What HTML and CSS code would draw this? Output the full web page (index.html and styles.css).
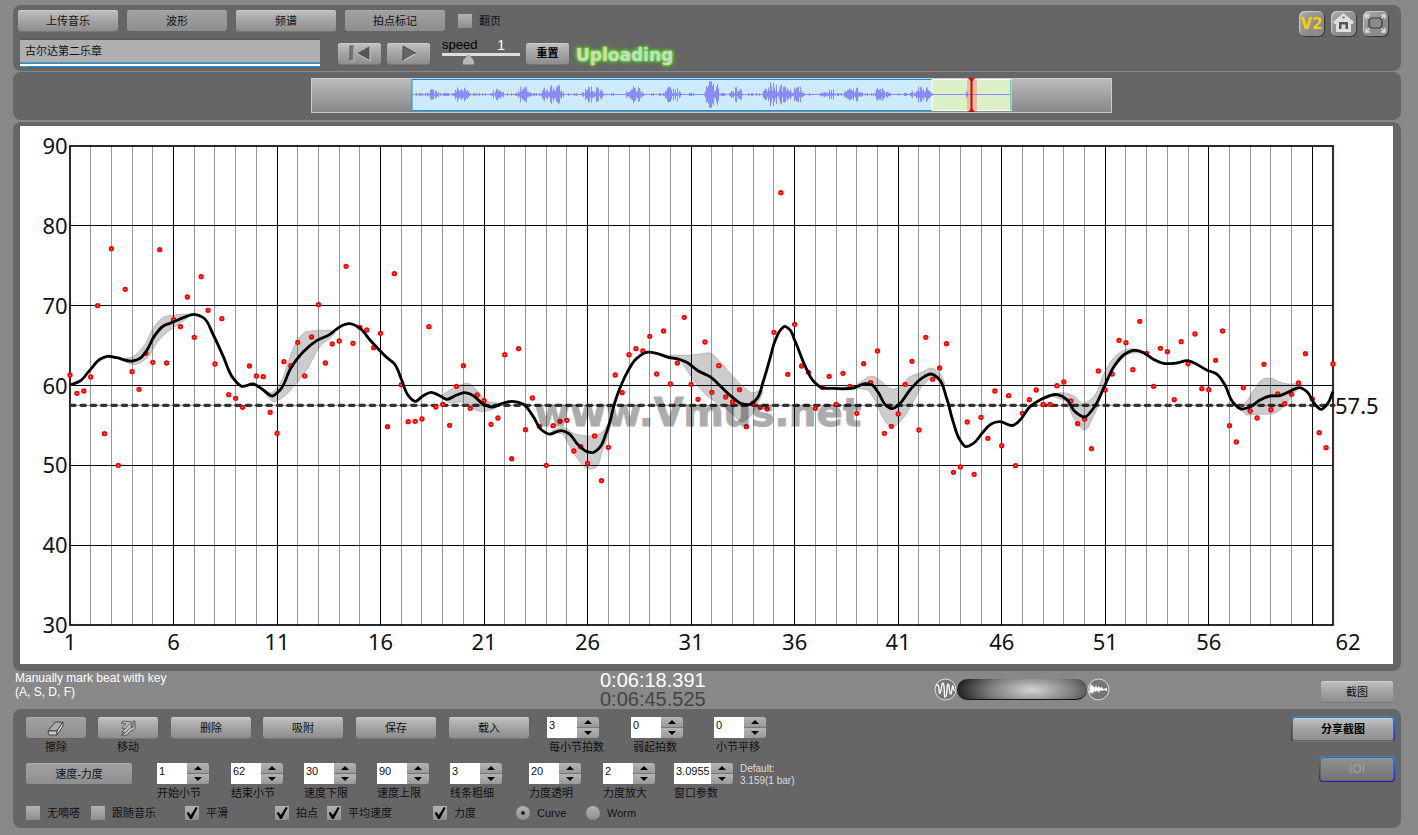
FILE: index.html
```html
<!DOCTYPE html>
<html lang="zh-CN">
<head>
<meta charset="utf-8">
<title>Vmus.net</title>
<link rel="stylesheet" href="styles.css">
</head>
<body>
<header class="panel top">
  <div class="top-main">
    <div class="tabs">
      <button class="btn w100">上传音乐</button>
      <button class="btn w100 dim">波形</button>
      <button class="btn w100">频谱</button>
      <button class="btn w100 dim">拍点标记</button>
      <div class="check flip"><input type="checkbox" id="flip"><label for="flip">翻页</label></div>
    </div>
    <div class="player">
      <input class="title" type="text" value="古尔达第二乐章" aria-label="曲目">
      <button class="btn transport" aria-label="后退"><svg width="24" height="17" viewBox="0 0 24 17"><path d="M2 1h4v15H2z" fill="#777" stroke="#555"/><path d="M6 1v15H2" fill="none" stroke="#ddd"/><path d="M22 1v15L9 8.500z" fill="#555"/><path d="M22 1v15L9 8.500" fill="none" stroke="#ccc"/></svg></button>
      <button class="btn transport" aria-label="播放"><svg width="24" height="17" viewBox="0 0 24 17"><path d="M6 1v15l13-7.500z" fill="#666"/><path d="M6 16l13-7.500" stroke="#ddd"/><path d="M6 16V1l13 7.500" fill="none" stroke="#444"/></svg></button>
      <div class="speed">
        <div class="speed-text"><label for="speed">speed</label><output for="speed">1</output></div>
        <input id="speed" type="range" min="0" max="3.2" step="0.1" value="1">
      </div>
      <button class="btn transport strong">重置</button>
      <span class="status">Uploading</span>
    </div>
  </div>
  <nav class="tools">
    <button class="tool v2">V2</button>
    <button class="tool" aria-label="主页"><svg width="25" height="25" viewBox="0 0 25 25"><path d="M12.500 2L23 11l-1.500 2H20v8H5v-8H3.500L2 11z" fill="#ddd"/><path d="M8 18v-7h9v7h-2.500v-4.500h-4V18z" fill="#555"/><circle cx="12.500" cy="6.500" r="1.300" fill="#888"/></svg></button>
    <button class="tool" aria-label="全屏"><svg width="25" height="25" viewBox="0 0 25 25"><path d="M8 7h9l2 2v6l-2 2H8l-2-2V9z" fill="#8a8a8a" stroke="#3c3c3c" stroke-width="1.200"/><g stroke="#ddd" stroke-width="1.400" fill="none"><path d="M3 8V4h4M3 4l3.500 3M18 4h4v4M22 4l-3.500 3M3 17v4h4M3 21l3.500-3.500M18 21h4v-4M22 21l-3.500-3.500"/></g></svg></button>
  </nav>
</header>

<section class="panel overview">
  <div class="strip"><svg id="wave" viewBox="0 0 799 33" aria-label="波形概览"></svg></div>
</section>

<main class="panel chart">
  <svg id="plot" viewBox="60 3 4119 1614" aria-label="速度曲线"></svg>
</main>

<section class="info">
  <p class="hint">Manually mark beat with key<br>(A, S, D, F)</p>
  <p class="time">0:06:18.391<br><span>0:06:45.525</span></p>
  <div class="zoomer">
    <svg width="23" height="23" viewBox="0 0 23 23"><circle cx="11.500" cy="11.500" r="10.500" fill="#777" stroke="#ddd"/><path d="M2 8c2-3 3 0 3 4s1 5 2 0 1-9 2.500-6 0 14 2 13 1-12 2.500-13 1 9 2.500 10S18 6 19 8s0 5 2 4" fill="none" stroke="#fff" stroke-width="1.300"/></svg>
    <div class="knob"></div>
    <svg width="23" height="23" viewBox="0 0 23 23"><circle cx="11.500" cy="11.500" r="10.500" fill="#777" stroke="#ddd"/><path d="M3 5l1 3 1-2 1 3 1-1 1 2 1-3 1 3 2-2 1 2 2-1 1 2 4-1v3l-3-1-2 1-2-1-1 3-2-3-1 2-2-1-1 3-1-2-1 2-1-2-1 3z" fill="#fff"/></svg>
  </div>
  <button class="btn shot">截图</button>
</section>

<footer class="panel controls">
  <div class="rows">
    <div class="row row-a">
      <div class="field center"><button class="btn dim" id="erase" aria-label="擦除"><svg width="18" height="16" viewBox="0 0 18 16"><path d="M1 11L8 2h8l-6 9z" fill="#aaa" stroke="#444"/><path d="M1 11h9v4H2z" fill="#ccc" stroke="#444"/><path d="M10 11l6-9v4l-6 9z" fill="#ddd" stroke="#444"/></svg></button><span>擦除</span></div>
      <div class="field center"><button class="btn" id="move" aria-label="移动"><svg width="18" height="18" viewBox="0 0 18 18"><path d="M2 16c2 1 5 1 7-1l3-3c3 0 4-2 4-4V2h-2v6l-2 1V3L4 2 2 4l5 1-4 4 3 1-3 3 3 1z" fill="#bbb" stroke="#555"/><path d="M6 14l5-5M6 10l4-5" stroke="#666"/></svg></button><span>移动</span></div>
      <div><button class="btn w80">删除</button></div>
      <div><button class="btn w80">吸附</button></div>
      <div><button class="btn w80">保存</button></div>
      <div><button class="btn w80">载入</button></div>
      <div class="field"><div class="stepper"><input id="f1" value="3"><span><button aria-label="加"></button><button aria-label="减"></button></span></div><label for="f1">每小节拍数</label></div>
      <div class="field"><div class="stepper"><input id="f2" value="0"><span><button aria-label="加"></button><button aria-label="减"></button></span></div><label for="f2">弱起拍数</label></div>
      <div class="field"><div class="stepper"><input id="f3" value="0"><span><button aria-label="加"></button><button aria-label="减"></button></span></div><label for="f3">小节平移</label></div>
    </div>
    <div class="row row-b">
      <div><button class="btn w106 dim">速度-力度</button></div>
      <div class="field"><div class="stepper"><input id="g1" value="1"><span><button aria-label="加"></button><button aria-label="减"></button></span></div><label for="g1">开始小节</label></div>
      <div class="field"><div class="stepper"><input id="g2" value="62"><span><button aria-label="加"></button><button aria-label="减"></button></span></div><label for="g2">结束小节</label></div>
      <div class="field"><div class="stepper"><input id="g3" value="30"><span><button aria-label="加"></button><button aria-label="减"></button></span></div><label for="g3">速度下限</label></div>
      <div class="field"><div class="stepper"><input id="g4" value="90"><span><button aria-label="加"></button><button aria-label="减"></button></span></div><label for="g4">速度上限</label></div>
      <div class="field"><div class="stepper"><input id="g5" value="3"><span><button aria-label="加"></button><button aria-label="减"></button></span></div><label for="g5">线条粗细</label></div>
      <div class="field"><div class="stepper"><input id="g6" value="20"><span><button aria-label="加"></button><button aria-label="减"></button></span></div><label for="g6">力度透明</label></div>
      <div class="field"><div class="stepper"><input id="g7" value="2"><span><button aria-label="加"></button><button aria-label="减"></button></span></div><label for="g7">力度放大</label></div>
      <div class="field"><div class="stepper wide"><input id="g8" value="3.0955"><span><button aria-label="加"></button><button aria-label="减"></button></span></div><label for="g8">窗口参数</label></div>
      <p class="default">Default:<br>3.159(1 bar)</p>
    </div>
    <div class="row row-c">
      <div class="check"><input type="checkbox" id="c1"><label for="c1">无嘀嗒</label></div>
      <div class="check"><input type="checkbox" id="c2"><label for="c2">跟随音乐</label></div>
      <div class="check"><input type="checkbox" id="c3" checked><label for="c3">平滑</label></div>
      <div class="check"><input type="checkbox" id="c4" checked><label for="c4">拍点</label></div>
      <div class="check"><input type="checkbox" id="c5" checked><label for="c5">平均速度</label></div>
      <div class="check"><input type="checkbox" id="c6" checked><label for="c6">力度</label></div>
      <div class="check"><input type="radio" name="kind" id="r1" checked><label for="r1">Curve</label></div>
      <div class="check"><input type="radio" name="kind" id="r2"><label for="r2">Worm</label></div>
    </div>
  </div>
  <div class="share">
    <div class="ring ring-wide"><button class="btn strong">分享截图</button></div>
    <div class="ring ring-off"><button class="btn" disabled>IOI</button></div>
  </div>
</footer>
<script src="plot.js"></script>
</body>
</html>
```

FILE: styles.css
```css
* { box-sizing: border-box; }
body {
  margin: 0;
  padding: 5px 17px 7px 13px;
  background: #888;
  color: #111;
  font: 11px/12px "Liberation Sans", "Noto Sans CJK SC", sans-serif;
  display: flex;
  flex-direction: column;
}
p { margin: 0; }
button, input { font: inherit; color: inherit; margin: 0; padding: 0; border: 0; }
label, span { white-space: nowrap; }
.panel { background: #666; border-radius: 8px; }

.btn {
  height: 21px;
  border-radius: 3px;
  background: linear-gradient(#c2c2c2, #a4a4a4 50%, #8e8e8e);
  box-shadow: inset 0 1px 0 #ccc, 0 1px 0 #777;
  display: block;
  text-align: center;
}
.btn.dim { background: linear-gradient(#a2a2a2, #8e8e8e); box-shadow: inset 0 1px 0 #aaa; }
.btn svg { display: block; margin: 0 auto; }
.w100 { width: 100px; }
.w80 { width: 80px; }
.w106 { width: 106px; }
.strong { font-weight: bold; color: #000; }

.top { display: flex; justify-content: space-between; padding: 5px 13px 4px 5px; }
.top-main { display: flex; flex-direction: column; gap: 8px; }
.tabs { display: flex; gap: 9px; }
.flip { margin-left: 4px; }
.player { display: flex; align-items: center; padding-left: 2px; }
.title {
  width: 300px;
  height: 28px;
  margin-right: 18px;
  padding: 0 5px 6px;
  background: linear-gradient(#555 0 1px, #b0b0b0 1px 23px, #888 23px 24px, #09f 24px 25px, #fff 25px 27px, #09f 27px);
}
.transport { width: 43px; margin-right: 6px; }
.speed { width: 78px; height: 28px; margin: 0 6px; display: flex; flex-direction: column; gap: 2px; }
.speed-text { display: flex; justify-content: space-between; padding-right: 15px; font-size: 13px; line-height: 12px; color: #000; }
.speed-text output { color: #fff; font-size: 14px; }
.speed input {
  appearance: none;
  width: 100%;
  height: 12px;
  background: linear-gradient(#ddd, #ddd) 0 0 / 100% 3px no-repeat;
}
.speed input::-webkit-slider-thumb {
  appearance: none;
  width: 11px;
  height: 11px;
  background: #b8b8b8;
  clip-path: polygon(50% 0, 100% 65%, 100% 100%, 0 100%, 0 65%);
}
.status {
  font: bold 17px/20px "DejaVu Sans", sans-serif;
  color: #d4d4d4;
  text-shadow: 0 0 2px #6f2, 0 0 2px #6e2, 0 0 4px #6d2, 0 0 5px #5c2;
  padding: 4px 0 0 1px;
}
.tools { display: flex; gap: 7px; padding-top: 1px; }
.tool {
  width: 25px;
  height: 25px;
  border-radius: 6px;
  background: linear-gradient(135deg, #aaa, #8c8c8c 60%);
  box-shadow: inset 1px 1px 1px #ccc, 1px 1px 1px #2c3c34;
}
.tool svg { display: block; }
.v2 { font: bold 15px/24px "DejaVu Sans", sans-serif; color: #fc0; }

.overview { margin-top: 1px; padding: 6px 0 7px 9px; display: flex; justify-content: center; }
.strip { width: 801px; border: 1px solid #ccc; background: linear-gradient(#bbb, #888); }
.strip svg { display: block; width: 100%; overflow: visible; }

.chart { margin-top: 2px; padding: 4px 8px 7px 7px; }
.chart svg { display: block; width: 100%; background: #fff; }
.axis { font: 66px "Noto Sans", sans-serif; fill: #111; }
.mark { font: bold 116px "DejaVu Sans", sans-serif; fill: #000; stroke: #000; stroke-width: 3; opacity: .32; }

.info { display: grid; grid-template-columns: 585px 334px 1fr 72px; padding: 0 8px 0 2px; height: 38px; }
.hint { color: #fff; font-size: 12px; line-height: 14px; }
.time { color: #fff; font-size: 20px; line-height: 19px; }
.time span { color: #444; }
.zoomer { display: flex; padding-top: 7px; }
.knob {
  width: 130px;
  height: 21px;
  margin-top: 1px;
  border-radius: 11px;
  background: radial-gradient(ellipse 75px 26px at 75px 11px, #d4d4d4, #777 60%, #222);
  border-bottom: 1px solid #111;
}
.shot { margin-top: 10px; }

.controls { display: flex; justify-content: space-between; padding: 8px 6px 8px 13px; }
.row { display: grid; align-items: start; }
.row-a { grid-template-columns: 72px 73px 92px 93px 93px 98px 84px 83px 60px; height: 46px; }
.row-b { grid-template-columns: 131px 74px 73px 73px 73px 79px 74px 71px 66px 80px; height: 43px; }
.row-c { grid-template-columns: 65px 94px 90px 52px 106px 83px 70px 80px; height: 14px; }
.field { display: flex; flex-direction: column; gap: 3px; }
.field .btn { width: 60px; }
.row-a label { padding-left: 2px; }
.center { width: 60px; text-align: center; }
.stepper { display: flex; height: 21px; }
.stepper input { width: 30px; background: #fff; padding: 0 2px 5px; }
.wide input { width: 37px; }
.stepper span {
  width: 22px;
  display: grid;
  grid-template-rows: 1fr 1fr;
  gap: 1px;
  background: #777;
  border-radius: 0 3px 3px 0;
  overflow: hidden;
}
.stepper button { background: linear-gradient(#b4b4b4, #999); display: grid; place-items: center; }
.stepper button::before { content: ""; width: 8px; height: 4px; background: #000; clip-path: polygon(50% 0, 100% 100%, 0 100%); }
.stepper button + button::before { clip-path: polygon(0 0, 100% 0, 50% 100%); }
.default { font-size: 10px; color: #ddd; }

.check { display: flex; align-items: center; gap: 7px; }
.check input {
  appearance: none;
  width: 14px;
  height: 14px;
  background: linear-gradient(#b2b2b2, #8e8e8e);
  display: grid;
  place-items: center;
}
.check input[type="checkbox"]:checked::before {
  content: "";
  width: 12px;
  height: 12px;
  background: #000;
  clip-path: polygon(5% 50%, 22% 42%, 40% 68%, 82% 0, 98% 6%, 48% 100%, 34% 100%);
}
.check input[type="radio"] { border-radius: 50%; }
.check input[type="radio"]:checked::before { content: ""; width: 4px; height: 4px; border-radius: 50%; background: #222; }

.share { display: flex; flex-direction: column; align-items: flex-end; gap: 14px; margin-top: -1px; }
.ring {
  width: 76px;
  height: 26px;
  padding: 1px;
  border-radius: 4px;
  background: linear-gradient(#28f, #31b);
}
.ring-wide { width: 104px; }
.ring .btn { width: 100%; height: 24px; border: 1px solid #666; }
.ring-off .btn { background: linear-gradient(#909090, #747474); color: #a2a2a2; font-size: 12px; box-shadow: none; }
```

FILE: plot.js
```js
// Plot units: three per pixel at full width.
const LEFT = 210, RIGHT = 3999, TOP = 63, BOTTOM = 1500;
const BARS = 61, BEATS = 183;

const beats = [
  750,805,798,756,542,926,371,1021,493,740,793,685,712,374,714,584,605,516,637,455,556,717,581,809,820,847,723,753,755,862,
  925,710,722,652,753,636,539,714,657,648,424,655,607,615,668,625,905,446,779,890,889,882,605,846,838,901,784,722,850,810,
  827,898,879,689,1001,671,914,819,904,1021,902,889,886,978,965,1015,933,1067,967,750,803,689,671,678,634,747,618,777,714,577,
  778,823,651,802,722,816,831,794,905,834,847,852,622,203,748,598,723,742,850,787,754,838,745,784,865,716,773,678,925,904,
  867,778,709,915,637,763,729,656,1042,1026,891,1048,877,940,798,962,812,1022,865,824,795,838,838,782,771,828,896,882,971,738,
  795,747,646,653,734,589,685,784,670,680,824,650,716,627,791,794,706,618,902,951,788,858,879,718,854,807,836,808,774,686,
  822,923,968,717
];

const curve = [210,780,240,768,270,735,300,703,322,694,350,698,397,708,420,700,440,677,462,635,490,603,520,591,550,578,583,568,610,578,640,630,670,695,700,760,725,784,760,777,790,795,817,813,840,795,873,728,910,680,950,647,990,628,1020,605,1047,596,1080,610,1110,645,1140,677,1160,697,1182,715,1205,765,1225,812,1245,829,1270,812,1293,802,1315,810,1340,823,1370,810,1393,803,1420,812,1450,838,1475,846,1510,834,1536,829,1570,838,1600,875,1625,915,1645,927,1685,917,1705,925,1735,960,1760,979,1778,983,1797,970,1820,920,1850,815,1880,745,1910,700,1940,682,1970,685,2005,697,2035,702,2060,712,2095,738,2130,755,2160,782,2195,815,2225,836,2250,838,2270,822,2290,768,2310,700,2325,648,2340,617,2355,604,2368,613,2385,648,2415,722,2440,768,2465,788,2500,790,2560,789,2595,776,2615,779,2635,803,2660,843,2677,851,2695,840,2730,795,2765,760,2793,747,2815,760,2840,820,2860,892,2880,945,2898,965,2920,955,2950,920,2975,896,2998,890,3040,901,3060,885,3090,845,3120,825,3173,809,3200,823,3225,860,3254,876,3280,850,3315,780,3345,720,3375,687,3403,676,3430,683,3460,703,3490,715,3530,714,3563,707,3590,718,3620,735,3650,747,3672,775,3700,833,3723,852,3750,846,3780,825,3810,813,3840,812,3870,799,3900,788,3920,799,3945,838,3963,853,3980,840,3999,800];

const bands = [
  [355,702,397,695,430,665,460,610,490,577,515,571,570,571,530,602,497,625,470,655,440,700,400,719,375,710],
  [775,785,815,803,840,775,865,710,890,650,915,622,945,617,1005,622,960,665,920,735,880,785,845,820,822,830,795,805],
  [1320,815,1350,795,1380,780,1405,775,1430,795,1460,828,1505,838,1480,852,1450,860,1415,850,1385,832,1350,835],
  [1655,918,1690,907,1720,925,1760,932,1790,930,1810,918,1835,870,1825,930,1805,985,1785,1030,1765,1032,1740,1010,1710,965,1690,928],
  [1990,690,2070,690,2100,687,2130,684,2160,710,2200,755,2230,785,2258,803,2285,795,2265,850,2245,880,2225,890,2200,870,2170,845,2130,820,2100,790,2070,750,2045,710],
  [2560,787,2590,765,2615,753,2645,770,2675,792,2700,785,2730,755,2765,742,2793,729,2815,740,2835,785,2800,758,2770,780,2740,830,2700,890,2677,907,2650,880,2630,835,2605,795],
  [3150,810,3190,803,3220,812,3250,835,3280,815,3310,750,3340,700,3370,677,3400,671,3425,677,3380,690,3340,735,3310,795,3280,875,3254,915,3225,885,3200,830],
  [3715,850,3740,828,3765,790,3785,765,3808,759,3840,772,3865,777,3905,777,3880,808,3855,840,3830,862,3780,868,3740,870]
];

// Chord-length Catmull-Rom spline through a flat x, y list.
function spline(p) {
  const pts = [];
  for (let i = 0; i < p.length; i += 2) pts.push([p[i], p[i + 1]]);
  const n = pts.length;
  const gap = (a, b) => Math.hypot(b[0] - a[0], b[1] - a[1]);
  const tangent = (i, k) => {
    if (i === 0) return (pts[1][k] - pts[0][k]) / gap(pts[0], pts[1]);
    if (i === n - 1) return (pts[i][k] - pts[i - 1][k]) / gap(pts[i - 1], pts[i]);
    const h0 = gap(pts[i - 1], pts[i]), h1 = gap(pts[i], pts[i + 1]);
    const s0 = (pts[i][k] - pts[i - 1][k]) / h0, s1 = (pts[i + 1][k] - pts[i][k]) / h1;
    return (s0 * h1 + s1 * h0) / (h0 + h1);
  };
  let d = `M${pts[0]}`;
  for (let i = 0; i < n - 1; i++) {
    const a = pts[i], b = pts[i + 1], h = gap(a, b) / 3;
    d += `C${a[0] + h * tangent(i, 0)} ${a[1] + h * tangent(i, 1)} ${b[0] - h * tangent(i + 1, 0)} ${b[1] - h * tangent(i + 1, 1)} ${b[0]} ${b[1]}`;
  }
  return d;
}

const snap = v => Math.round((v - 1.5) / 3) * 3 + 1.5;
let out = '';
for (let i = 1; i < BARS; i++) {
  const x = snap(LEFT + (RIGHT - LEFT) * i / BARS);
  out += `<path d="M${x} ${TOP}V${BOTTOM}" stroke="${i % 5 ? '#999' : '#000'}" stroke-width="3"/>`;
}
for (let v = 40; v < 90; v += 10) {
  const y = snap(BOTTOM - (BOTTOM - TOP) * (v - 30) / 60);
  out += `<path d="M${LEFT} ${y}H${RIGHT}" stroke="#000" stroke-width="3"/>`;
}
out += `<rect x="${LEFT}" y="${TOP}" width="${RIGHT - LEFT}" height="${BOTTOM - TOP}" fill="none" stroke="#000" stroke-width="5"/>`;
out += `<path d="M4001 ${TOP}V${BOTTOM}" stroke="#d00" stroke-width="2"/>`;
for (let v = 30; v <= 90; v += 10) {
  out += `<text class="axis" x="203" y="${BOTTOM - (BOTTOM - TOP) * (v - 30) / 60 + 24}" text-anchor="end">${v}</text>`;
}
for (let b = 1; b < 61; b += 5) {
  out += `<text class="axis" x="${LEFT + (RIGHT - LEFT) * (b - 1) / BARS}" y="1574" text-anchor="middle">${b}</text>`;
}
out += `<text class="axis" x="4044" y="1574" text-anchor="middle">62</text>`;
out += `<path d="M212 841H4002" stroke="#333" stroke-width="10" stroke-linecap="round" stroke-dasharray="13 18"/>`;
out += `<path d="M212 841H4002" stroke="#333" stroke-opacity=".5" stroke-width="3"/>`;
out += `<text class="axis" x="4005" y="867">57.5</text>`;
for (const b of bands) out += `<path d="${spline(b)}Z" fill="#000" fill-opacity=".2" stroke="#888" stroke-opacity=".7" stroke-width="2"/>`;
beats.forEach((y, i) => {
  out += `<circle cx="${LEFT + (RIGHT - LEFT) * i / BEATS}" cy="${y}" r="5" fill="#fbb" stroke="#f00" stroke-width="6"/>`;
});
out += `<path d="${spline(curve)}" fill="none" stroke="#000" stroke-width="8.500" stroke-linejoin="round"/>`;
out += `<text class="mark" x="1603" y="902">www.Vmus.net</text>`;
document.getElementById('plot').innerHTML = out;

// Overview waveform: [centre, half width, amplitude]
const bursts = [[120,8,6],[149,10,8],[163,6,2],[185,8,7],[211,9,8],[240,13,11],[281,13,9],[322,10,9],[360,10,8],[400,9,14],[424,8,8],[466,18,12],[485,8,8],[516,8,8],[541,11,7],[569,10,7],[609,13,8],[654,2,4]];
let wave = '<rect x="100" y="0.500" width="599" height="31" fill="#cdebff" stroke="#1090ee"/><rect x="620" y="0.500" width="79" height="31" fill="#dbf0c6" stroke="#fff"/><path d="M698.500 1v30" stroke="#7cb"/>';
wave += '<path d="M101 15.500H698" stroke="#8484f4"/>';
let d = '', seed = 7;
for (let x = 101; x < 680; x++) {
  seed = (seed * 1103515245 + 12345) % 2147483648;
  const r = seed / 2147483648;
  let a = x < 620 && r > 0.7 ? 1.5 : 0.5;
  for (const [c, w, h] of bursts) {
    const k = 1 - Math.abs(x - c) / w;
    if (k > 0) a = Math.max(a, h * (0.15 + 0.85 * r) * Math.min(1, k * 1.8));
  }
  d += `M${x + 0.5} ${15.5 - a}v${2 * a}`;
}
wave += `<path d="${d}" stroke="#8a8af8"/>`;
wave += '<rect x="655" y="0" width="10" height="32" fill="#e66" fill-opacity=".35"/><path d="M659.500 0v32" stroke="#d00" stroke-width="2"/><path d="M656 -1h7l-3.500 4zM656 33h7l-3.500 -4z" fill="#d00"/>';
document.getElementById('wave').innerHTML = wave;
```
